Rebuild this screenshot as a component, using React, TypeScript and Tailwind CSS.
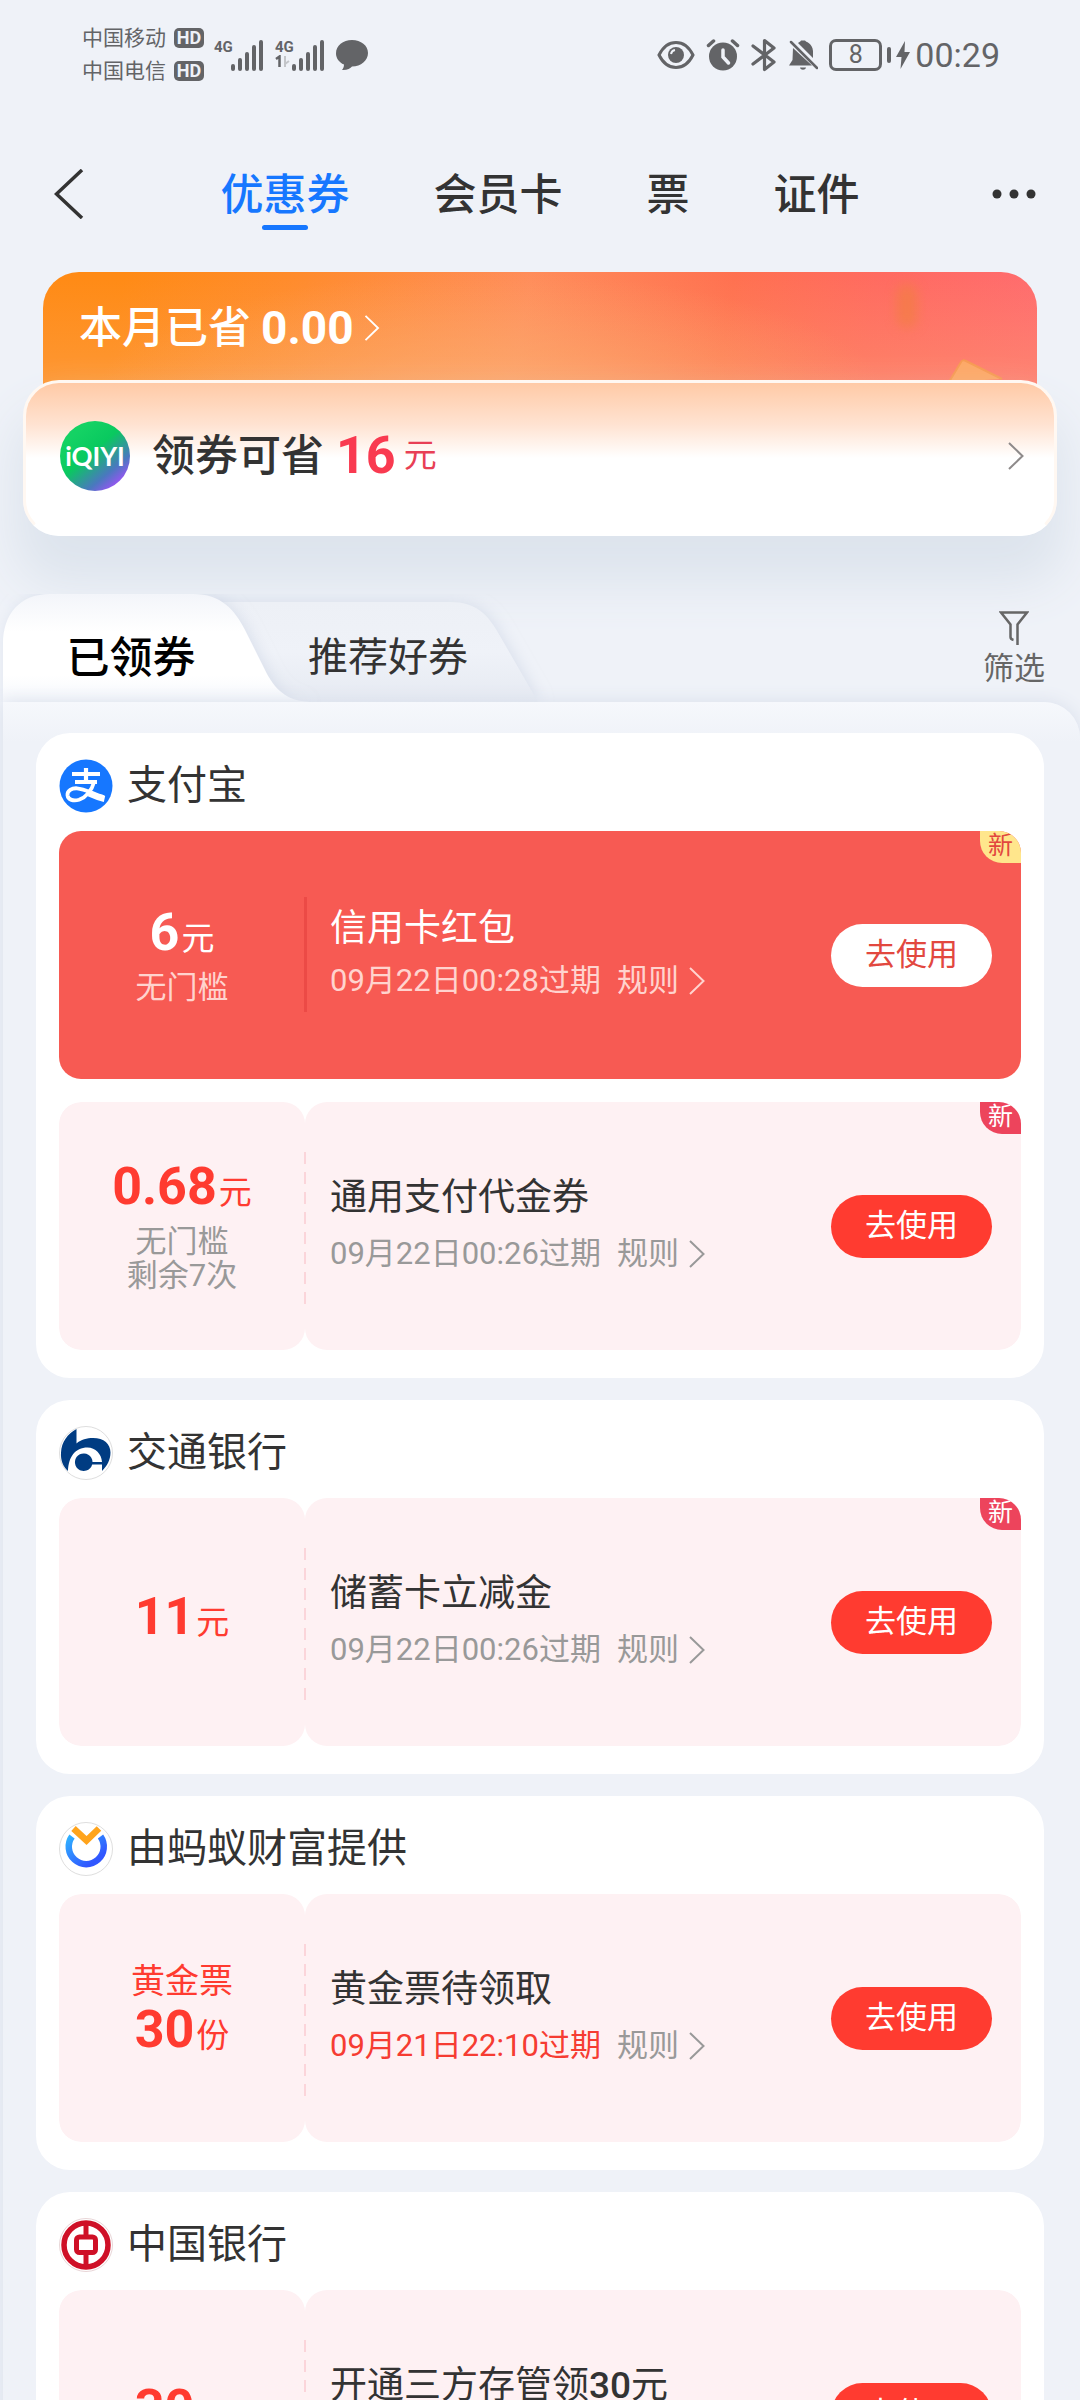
import { useState } from "react";
import type { ReactNode } from "react";
import cx from "clsx";

const navTabs = ["优惠券", "会员卡", "票", "证件"];

type Coupon = {
  id: number;
  label?: string;
  amount: string;
  unit: string;
  notes?: string[];
  title: ReactNode;
  expires: string;
  urgent?: boolean;
  isNew?: boolean;
  solid?: boolean;
};

type Group = { name: string; logo: ReactNode; coupons: Coupon[] };

function AlipayLogo() {
  return (
    <svg viewBox="0 0 54 54" className="size-[54px]" aria-hidden="true">
      <circle cx="27" cy="27" r="26.5" fill="#1677ff" />
      <g fill="none" stroke="#fff">
        <path d="M13 15h28M27 9v14M16 23h22" strokeWidth="4.200" />
        <path
          d="M35.500 22c-2.500 8.500-8 16-15.500 18.800-5.500 1.700-11 0-11.500-4.600-.4-4.700 4.500-7.200 9.500-6.900 8 .6 16 5.700 27 9"
          strokeWidth="3.800"
        />
        <path d="M30 34.500c5 2.300 9 4 15.500 5.500" strokeWidth="6" />
      </g>
    </svg>
  );
}

function BocomLogo() {
  return (
    <svg viewBox="0 0 54 54" className="size-[54px]" aria-hidden="true">
      <circle cx="27" cy="27" r="26.500" fill="#fff" stroke="#dedede" />
      <path
        fill="#003c82"
        d="M17.500 3v14.500C22 13.500 28 12 34 12c11 0 17.500 6 17.500 14.500 0 7.500-3.500 13.500-8.500 18.500v-6.500h-9.800A8.800 8.800 0 1 1 33.500 36H43c-.5-8-6.500-14.500-14.500-14.500C16 21.500 9.500 31 9 45 4 40.500 1.500 34 2 26.500 2.500 16 8.500 8 17.500 3Z"
      />
    </svg>
  );
}

function AntWealthLogo() {
  return (
    <svg viewBox="0 0 54 54" className="size-[54px]" aria-hidden="true">
      <defs>
        <linearGradient id="wealth-ring" x1="0" y1="0" x2="1" y2="1">
          <stop offset="0" stopColor="#2fb0ff" />
          <stop offset=".8" stopColor="#3157ff" />
        </linearGradient>
      </defs>
      <circle cx="27" cy="27" r="26.500" fill="#fff" stroke="#dedede" />
      <path
        d="M13 14.500a17.500 17.500 0 1 0 28.500 0"
        fill="none"
        stroke="url(#wealth-ring)"
        strokeWidth="6.500"
      />
      <path d="M14.500 6.500 27.500 18.500 40 6.500" fill="none" stroke="#ffa41c" strokeWidth="6.500" />
    </svg>
  );
}

function BocLogo() {
  return (
    <svg viewBox="0 0 54 54" className="size-[54px]" aria-hidden="true">
      <circle cx="27" cy="27" r="26.500" fill="#fff" stroke="#e8d5d7" />
      <g fill="none" stroke="#cf1027">
        <circle cx="27" cy="27" r="22" strokeWidth="5.500" />
        <rect x="17.500" y="19" width="19" height="15.500" rx="3" strokeWidth="5" />
        <path d="M27 4v14M27 36v14" strokeWidth="5" />
      </g>
    </svg>
  );
}

const groups: Group[] = [
  {
    name: "支付宝",
    logo: <AlipayLogo />,
    coupons: [
      {
        id: 1,
        amount: "6",
        unit: "元",
        notes: ["无门槛"],
        title: "信用卡红包",
        expires: "09月22日00:28过期",
        isNew: true,
        solid: true,
      },
      {
        id: 2,
        amount: "0.68",
        unit: "元",
        notes: ["无门槛", "剩余7次"],
        title: "通用支付代金券",
        expires: "09月22日00:26过期",
        isNew: true,
      },
    ],
  },
  {
    name: "交通银行",
    logo: <BocomLogo />,
    coupons: [
      {
        id: 3,
        amount: "11",
        unit: "元",
        title: "储蓄卡立减金",
        expires: "09月22日00:26过期",
        isNew: true,
      },
    ],
  },
  {
    name: "由蚂蚁财富提供",
    logo: <AntWealthLogo />,
    coupons: [
      {
        id: 4,
        label: "黄金票",
        amount: "30",
        unit: "份",
        title: "黄金票待领取",
        expires: "09月21日22:10过期",
        urgent: true,
      },
    ],
  },
  {
    name: "中国银行",
    logo: <BocLogo />,
    coupons: [
      {
        id: 5,
        amount: "30",
        unit: "元",
        title: (
          <>
            开通三方存管领<span className="font-medium">30</span>元
          </>
        ),
        expires: "09月22日00:26过期",
      },
    ],
  },
];

function Chevron({ className }: { className?: string }) {
  return (
    <svg viewBox="0 0 16 28" fill="none" className={className} aria-hidden="true">
      <path d="m1 1 13.500 13L1 27" stroke="currentColor" strokeWidth="2" />
    </svg>
  );
}

function Carrier({ name }: { name: string }) {
  return (
    <div className="flex items-center gap-2">
      <span className="text-[21px] leading-[33px]">{name}</span>
      <span className="flex h-[20px] w-[30px] items-center justify-center rounded-[5px] bg-[#636467] text-[18px] font-bold leading-none text-[#eff2f8]">
        HD
      </span>
    </div>
  );
}

function Signal({ second }: { second?: boolean }) {
  return (
    <div className="flex items-start">
      <div className="flex w-[16px] flex-col text-[15px] font-bold leading-[16px]">
        <span>4G</span>
        {second && (
          <svg viewBox="0 0 16 12" className="h-3 w-4" aria-hidden="true">
            <path d="m1 4 3.500-2.500V12" fill="none" stroke="currentColor" strokeWidth="2.500" />
            <path d="M10 1v11M10 9l4-3" fill="none" stroke="#c3c5c9" strokeWidth="2" />
          </svg>
        )}
      </div>
      <svg viewBox="0 0 34 32" className="h-8 w-[34px]" aria-hidden="true">
        <path
          d="M3 27v3M10 21v9M17 15v15M24 8v22M31 3v27"
          stroke="currentColor"
          strokeWidth="4"
          strokeLinecap="round"
        />
      </svg>
    </div>
  );
}

function StatusBar() {
  return (
    <div className="flex h-[109px] items-center justify-between pl-[82px] pr-20 text-[#636467]">
      <div className="flex items-center gap-[10px]">
        <div>
          <Carrier name="中国移动" />
          <Carrier name="中国电信" />
        </div>
        <div className="flex items-center gap-[11px]">
          <Signal />
          <Signal second />
          <svg viewBox="0 0 32 32" className="size-8" aria-hidden="true">
            <path
              fill="currentColor"
              d="M16 1c9 0 16 5.500 16 13s-7 13.500-16 13.500c-1.500 2-5 3.800-10 3.500 1-1.200 2-3 2-5.500C3 23.500 0 19 0 14.500 0 6.500 7 1 16 1Z"
            />
          </svg>
        </div>
      </div>
      <div className="flex items-center gap-[11px]">
        <svg viewBox="0 0 38 30" className="h-[30px] w-[38px]" fill="none" aria-hidden="true">
          <path
            d="M2 15C6 7 12 2.500 19 2.500S32 7 36 15c-4 8-10 12.500-17 12.500S6 23 2 15Z"
            stroke="currentColor"
            strokeWidth="3"
          />
          <circle cx="19" cy="15" r="8" fill="currentColor" />
          <path d="M14 14a5 5 0 0 1 4-4" stroke="#eff2f8" strokeWidth="2" />
        </svg>
        <svg viewBox="0 0 34 32" className="h-8 w-[34px]" fill="none" aria-hidden="true">
          <circle cx="17" cy="17.500" r="14" fill="currentColor" />
          <path
            d="m2.500 6.500 5-4.500M31.500 6.500l-5-4.500"
            stroke="currentColor"
            strokeWidth="3.500"
            strokeLinecap="round"
          />
          <path d="M17 11v7l5.500 6" stroke="#eff2f8" strokeWidth="3.500" strokeLinecap="round" />
        </svg>
        <svg viewBox="0 0 26 34" className="h-[34px] w-[26px]" fill="none" aria-hidden="true">
          <path
            d="m2 8 21 16-9.500 7.500V2.500L23 10 2 26"
            stroke="currentColor"
            strokeWidth="3.200"
            strokeLinecap="round"
            strokeLinejoin="round"
          />
        </svg>
        <svg viewBox="0 0 30 32" className="h-8 w-[30px]" aria-hidden="true">
          <path
            fill="currentColor"
            d="M10 4c1.500-1 2.500-1.200 3-2.500h4C17.500 3 24.500 4 25 12v7ZM5 9l19 17.500H1L4.500 21ZM12 28.500h6c-.5 3-5.500 3-6 0Z"
          />
          <path d="m3 3 26 26" stroke="currentColor" strokeWidth="2.500" strokeLinecap="round" />
        </svg>
        <div className="flex items-center gap-[5px]">
          <span className="flex h-8 w-[53px] items-center justify-center rounded-[7px] border-[3px] border-[#636467] text-[25px] leading-none">
            8
          </span>
          <span className="h-4 w-1 rounded-sm bg-[#636467]" />
          <svg viewBox="0 0 14 28" className="h-7 w-[14px]" aria-hidden="true">
            <path d="M9 0 0 16h5.500L4.500 28 14 11H8.500Z" fill="currentColor" />
          </svg>
          <span className="text-[34px] leading-none">00:29</span>
        </div>
      </div>
    </div>
  );
}

function Header() {
  const [active, setActive] = useState("优惠券");

  return (
    <header className="mb-[38px] mt-[45px] flex h-20 items-center justify-between px-[44px] text-[#333]">
      <button type="button" aria-label="返回" className="flex h-20 w-14 items-center justify-start pl-[10px]">
        <svg viewBox="0 0 30 50" fill="none" className="h-[50px] w-[30px]" aria-hidden="true">
          <path d="M28 1 2.500 25 28 49" stroke="currentColor" strokeWidth="3.500" />
        </svg>
      </button>
      <nav className="flex gap-[84px]">
        {navTabs.map((tab) => (
          <button
            key={tab}
            type="button"
            onClick={() => setActive(tab)}
            className={cx(
              "relative h-20 pt-[3px] text-[43px] font-medium",
              active === tab && "text-[#1677ff]"
            )}
          >
            {tab}
            {active === tab && (
              <span className="absolute bottom-1 left-1/2 h-[5px] w-[46px] -translate-x-1/2 rounded-full bg-[#1677ff]" />
            )}
          </button>
        ))}
      </nav>
      <button type="button" aria-label="更多" className="flex h-20 w-14 items-center justify-end">
        <svg viewBox="0 0 44 10" className="h-[10px] w-11" aria-hidden="true">
          <g fill="currentColor">
            <circle cx="5" cy="5" r="4.500" />
            <circle cx="22" cy="5" r="4.500" />
            <circle cx="39" cy="5" r="4.500" />
          </g>
        </svg>
      </button>
    </header>
  );
}

function Savings() {
  return (
    <section>
      <a
        href="#saved"
        className="relative mx-[43px] flex h-[140px] items-start overflow-hidden rounded-t-[36px] bg-[linear-gradient(100deg,#ff8a14_8%,#ff8b2c_25%,#ff8c5a_48%,#ff7050_68%,#ff6a60_82%,#ff6c70_100%)] pl-9 pt-7 text-white"
      >
        <span className="absolute inset-0 bg-[linear-gradient(transparent,#fbb27355_80%)]" />
        <span className="absolute inset-0 bg-[radial-gradient(ellipse_40%_90%_at_45%_90%,#fbb27399,transparent)]" />
        <span className="absolute right-[120px] top-3 h-11 w-5 rounded-full bg-[#f0803c]/60 blur-[6px]" />
        <svg viewBox="0 0 56 24" className="absolute right-[34px] top-[86px] h-6 w-14" aria-hidden="true">
          <path d="M2 24 14 4c1-2 3-2 5-1l36 18" fill="#fda866" stroke="#f79a52" strokeWidth="2" />
        </svg>
        <span className="relative flex items-center gap-[10px] text-[43px] font-medium leading-[56px]">
          本月已省
          <span className="text-[46px] font-bold">0.00</span>
          <Chevron className="h-[26px] w-4" />
        </span>
      </a>
      <a
        href="#claim"
        className="relative mx-[23px] -mt-8 flex h-[156px] items-center rounded-[36px] border-[3px] border-[#fff8f2] border-b-white bg-[linear-gradient(#ffcaa6,#ffe3d2_28%,#fff_50%)] pb-1 pl-[34px] pr-[30px] text-[#333] shadow-[0_40px_50px_8px_#dde4ed]"
      >
        <span className="flex size-[70px] items-center justify-center rounded-full bg-[linear-gradient(140deg,#14d264_20%,#09c95f_45%,#4a78bf_72%,#a94dff_90%)] font-['Lato'] text-[26px] font-bold text-white">
          iQIYI
        </span>
        <span className="ml-[22px] text-[43px] font-medium">领券可省</span>
        <span className="ml-3 text-[52px] font-bold text-[#f93a50]">16</span>
        <span className="ml-2 text-[33px] text-[#e83f55]">元</span>
        <Chevron className="ml-auto h-7 w-4 text-[#8e8a8a]" />
      </a>
    </section>
  );
}

function FolderTabs() {
  return (
    <div className="relative mt-[58px] flex h-[108px]">
      <svg
        viewBox="0 0 560 108"
        className="absolute left-0 top-0 h-[108px] w-[560px]"
        aria-hidden="true"
      >
        <defs>
          <linearGradient id="tab-on" x1="0" y1="0" x2="0" y2="1">
            <stop offset="0" stopColor="#f3f5fa" />
            <stop offset=".35" stopColor="#fff" />
            <stop offset=".75" stopColor="#fff" />
            <stop offset="1" stopColor="#f6f8fc" />
          </linearGradient>
          <linearGradient id="tab-off" x1="0" y1="0" x2="0" y2="1">
            <stop offset="0" stopColor="#edf0f6" />
            <stop offset=".5" stopColor="#eff2f8" />
            <stop offset="1" stopColor="#e6eaf2" />
          </linearGradient>
          <filter id="tab-shadow" x="-10%" y="-20%" width="120%" height="140%">
            <feDropShadow dx="3" dy="0" stdDeviation="7" floodColor="#c9d2e2" floodOpacity=".55" />
          </filter>
        </defs>
        <path
          d="M200 8h250c26 0 38 12 50 34l38 66H200Z"
          fill="url(#tab-off)"
          filter="url(#tab-shadow)"
        />
        <path
          d="M3 108V50C3 20 20 0 50 0h143c28 0 42 16 52 36l22 44c10 18 22 28 47 28Z"
          fill="url(#tab-on)"
          filter="url(#tab-shadow)"
        />
      </svg>
      <button type="button" className="relative h-[108px] w-[262px] pt-5 text-[43px] font-medium leading-[88px] text-black">
        已领券
      </button>
      <button type="button" className="relative h-[108px] w-[252px] pt-5 text-[40px] leading-[88px] text-[#333]">
        推荐好券
      </button>
      <button
        type="button"
        className="ml-auto mr-[35px] flex flex-col items-center gap-1 pt-4 text-[31px] leading-[38px] text-[#666]"
      >
        <svg viewBox="0 0 30 36" fill="none" className="h-9 w-[30px]" aria-hidden="true">
          <path
            d="M18.500 35V14.500L28 2.500H2l9.500 12V27c0 1.500 1 2.500 3 3"
            stroke="currentColor"
            strokeWidth="2.500"
          />
        </svg>
        筛选
      </button>
    </div>
  );
}

function CouponRow({ coupon }: { coupon: Coupon }) {
  const { label, amount, unit, notes, title, expires, urgent, isNew, solid } = coupon;

  return (
    <li
      className={cx(
        "relative flex h-[248px] overflow-hidden rounded-[22px]",
        solid && "bg-[#f75a53] text-white"
      )}
    >
      <div
        className={cx(
          "flex w-[246px] flex-none flex-col items-center justify-center rounded-[22px] pb-1",
          solid ? "text-white" : "bg-[#fef1f3] text-[#ff3b30]"
        )}
      >
        {label && <span className="text-[34px] leading-[34px]">{label}</span>}
        <p className="flex items-baseline gap-[2px] leading-[64px]">
          <span className="text-[52px] font-bold">{amount}</span>
          <span className="text-[33px]">{unit}</span>
        </p>
        {notes && (
          <div
            className={cx(
              "text-center text-[31px] leading-[34px]",
              solid ? "text-[#ffd3ce]" : "text-[#999]"
            )}
          >
            {notes.map((note) => (
              <p key={note}>{note}</p>
            ))}
          </div>
        )}
      </div>
      <span
        className={cx(
          "absolute left-[245px]",
          solid
            ? "top-[66px] h-[115px] w-[3px] bg-[#ec4a46]"
            : "top-[50px] h-[154px] w-[2px] bg-[repeating-linear-gradient(#fbd5da_0_12px,transparent_12px_20px)]"
        )}
      />
      <div
        className={cx(
          "flex min-w-0 flex-1 items-center justify-between rounded-[22px] pl-[25px] pr-[29px]",
          !solid && "bg-[#fef1f3]"
        )}
      >
        <div className={solid ? "leading-[52px]" : "leading-[56px]"}>
          <h3 className={cx("text-[37px]", solid ? "text-white" : "text-[#333]")}>{title}</h3>
          <p
            className={cx(
              "flex items-center text-[31px]",
              solid ? "text-[#ffd3ce]" : "text-[#999]"
            )}
          >
            <span className={cx(urgent && "text-[#f63c32]")}>{expires}</span>
            <a href="#rules" className="ml-4 flex items-center gap-[10px]">
              规则
              <Chevron className="h-7 w-4" />
            </a>
          </p>
        </div>
        <button
          type="button"
          className={cx(
            "h-[63px] w-[161px] flex-none rounded-full text-[31px]",
            solid ? "bg-white text-[#e2483f]" : "bg-[#ff3b30] text-white"
          )}
        >
          去使用
        </button>
      </div>
      {isNew && (
        <span
          className={cx(
            "absolute right-0 top-0 h-8 w-[41px] rounded-bl-[22px] text-center text-[25px] leading-[30px]",
            solid ? "bg-[#ffe68c] text-[#e2483f]" : "bg-[#ed445c] text-white"
          )}
        >
          新
        </span>
      )}
    </li>
  );
}

function CouponGroup({ group }: { group: Group }) {
  return (
    <section className="rounded-[34px] bg-white px-[23px] pb-7">
      <h2 className="flex h-[98px] items-center gap-[14px] pt-2 text-[40px] text-[#333]">
        {group.logo}
        {group.name}
      </h2>
      <ul className="flex flex-col gap-[23px]">
        {group.coupons.map((coupon) => (
          <CouponRow key={coupon.id} coupon={coupon} />
        ))}
      </ul>
    </section>
  );
}

export default function App() {
  return (
    <div className="min-h-screen overflow-hidden bg-[#eff2f8] font-['Roboto','Noto_Sans_CJK_SC',sans-serif]">
      <StatusBar />
      <Header />
      <Savings />
      <FolderTabs />
      <main className="relative ml-[3px] flex flex-col gap-[22px] rounded-tr-[36px] bg-[linear-gradient(#f6f8fc,#eff2f8_40px)] pb-8 pl-[33px] pr-9 pt-[31px] shadow-[0_0_18px_#d9dfeb]">
        {groups.map((group) => (
          <CouponGroup key={group.name} group={group} />
        ))}
      </main>
    </div>
  );
}
